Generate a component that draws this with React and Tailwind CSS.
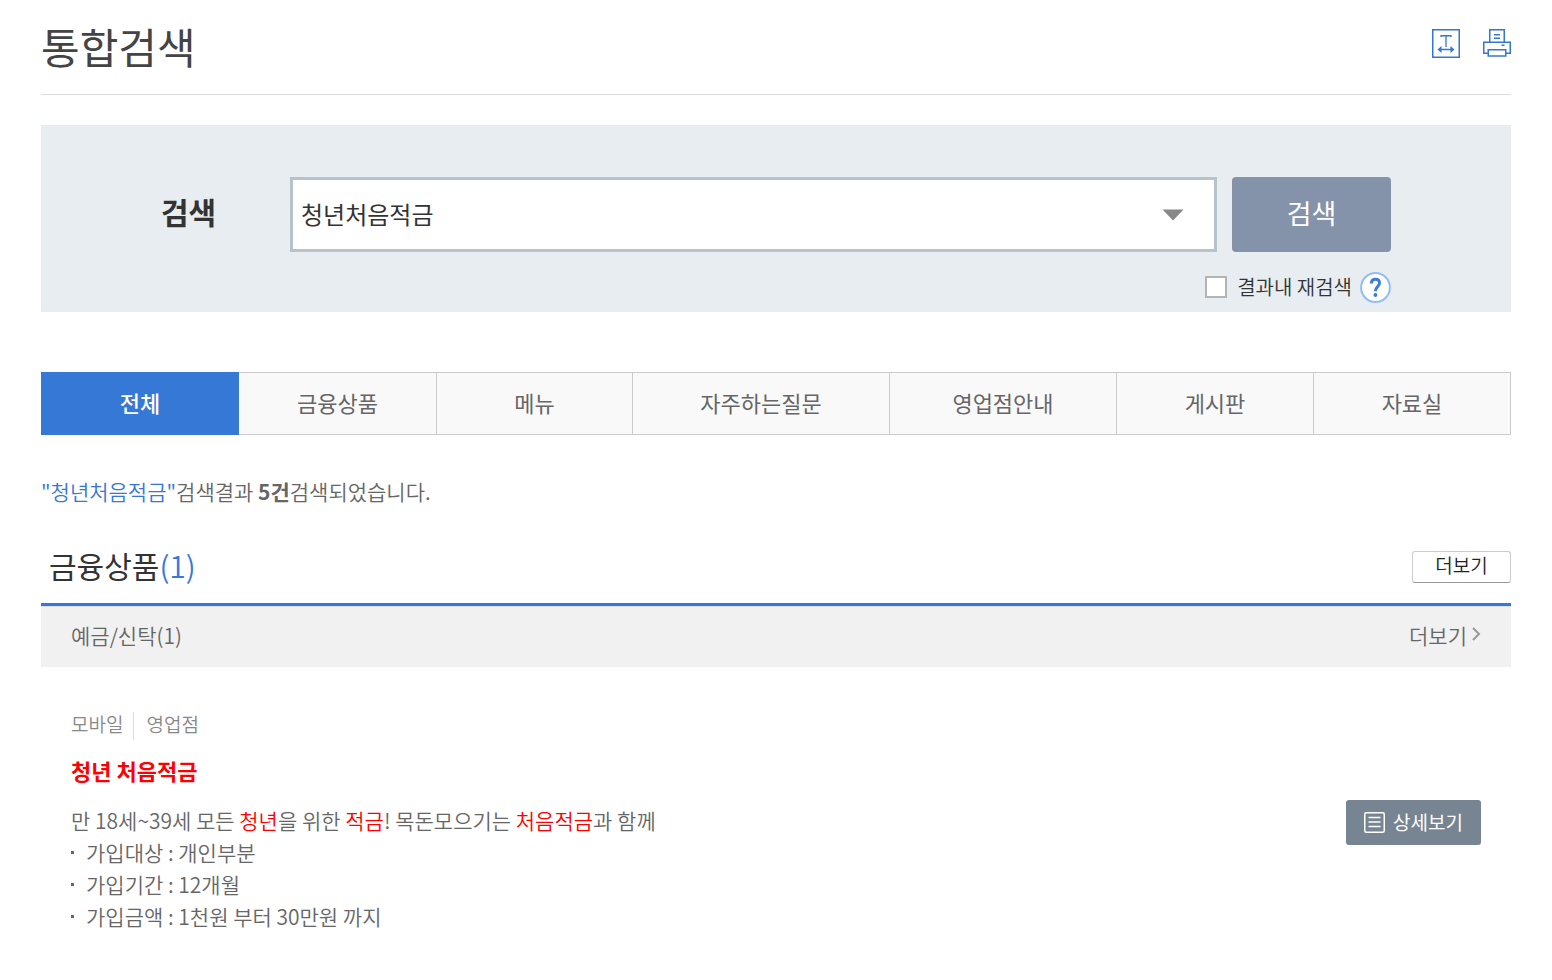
import { useState } from 'react';

const tabs = ['전체', '금융상품', '메뉴', '자주하는질문', '영업점안내', '게시판', '자료실'];

const details = [
  '가입대상 : 개인부분',
  '가입기간 : 12개월',
  '가입금액 : 1천원 부터 30만원 까지'
];

function TextSizeIcon() {
  return (
    <svg width="28" height="29" viewBox="0 0 28 29" fill="none" stroke="#3576d2" aria-hidden="true">
      <rect x="0.75" y="0.75" width="26.5" height="27.5" strokeWidth="1.5" />
      <path d="M9 8V6.75H19V8M14 7V18" strokeWidth="1.3" />
      <path d="M7 20.5H21" strokeWidth="1.5" />
      <path d="M9.5 17L5.5 20.5L9.5 24ZM18.5 17L22.5 20.5L18.5 24Z" fill="#3576d2" stroke="none" />
    </svg>
  );
}

function PrintIcon() {
  return (
    <svg width="28" height="28" viewBox="0 0 28 28" fill="none" stroke="#3576d2" strokeWidth="1.5" aria-hidden="true">
      <path d="M6.75 13V0.75H21.25V13" />
      <path d="M5 24.25H0.75V13.25H27.25V24.25H23" />
      <rect x="5.25" y="20.75" width="17.5" height="6.25" />
      <path d="M11 5.75H17M11 9.25H17M18.5 16.25H21.5" />
    </svg>
  );
}

function HelpIcon() {
  return (
    <svg width="31" height="31" viewBox="0 0 31 31" fill="none" aria-hidden="true">
      <circle cx="15.5" cy="15.5" r="14.4" fill="#fff" stroke="#8fbdf5" strokeWidth="2" />
      <path d="M11.4 11.5C11.4 8.6 13 7.3 15.4 7.3C17.8 7.3 19.5 8.8 19.5 11.1C19.5 14.6 15.4 14.8 15.4 19.2" stroke="#3f7bd9" strokeWidth="3" />
      <circle cx="15.4" cy="23" r="1.9" fill="#3f7bd9" />
    </svg>
  );
}

function ListIcon() {
  return (
    <svg width="21" height="21" viewBox="0 0 21 21" fill="none" stroke="#fff" aria-hidden="true">
      <rect x="0.75" y="0.75" width="19.5" height="19.5" rx="1.5" strokeWidth="1.5" />
      <path d="M4.5 5.5H16.5M4.5 10H16.5M4.5 14.5H16.5" strokeWidth="1.3" />
    </svg>
  );
}

export default function App() {
  const [keyword, setKeyword] = useState('청년처음적금');
  const [within, setWithin] = useState(false);
  const [activeTab, setActiveTab] = useState('전체');

  return (
    <main className="bg-white px-[41px] pb-12 font-['Noto_Sans_CJK_KR',sans-serif] text-[21px] font-[350] text-[#666]">
      <header className="flex h-[95px] items-center justify-between border-b border-[#ddd] pb-[2px]">
        <h1 className="text-[42px] leading-[60px] font-normal text-[#444]">통합검색</h1>
        <div className="flex items-center gap-[23px] pb-[6px]">
          <button type="button" aria-label="글자 크기"><TextSizeIcon /></button>
          <button type="button" aria-label="인쇄"><PrintIcon /></button>
        </div>
      </header>

      <form className="mt-[30px] bg-[#e8edf1] px-[120px] pt-[52px] pb-[9px]" onSubmit={(e) => e.preventDefault()}>
        <div className="flex h-[75px] items-center">
          <label htmlFor="keyword" className="w-[129px] pb-2 text-[30px] leading-10 font-bold text-[#333]">검색</label>
          <div className="flex h-full flex-1 items-center border-3 border-[#b8c2cb] bg-white pr-[30px]">
            <input
              id="keyword"
              type="text"
              value={keyword}
              onChange={(e) => setKeyword(e.target.value)}
              className="h-full min-w-0 flex-1 px-2 pb-[2px] text-[24px] font-normal text-[#333] outline-none"
            />
            <button type="button" aria-label="최근 검색어">
              <svg width="22" height="12" viewBox="0 0 22 12" aria-hidden="true">
                <path d="M0.5 0.5H21.5L11 11.5Z" fill="#888" />
              </svg>
            </button>
          </div>
          <button type="submit" className="ml-[15px] h-full w-[159px] rounded-[4px] bg-[#8593aa] pb-[2px] text-[27px] font-normal text-white">
            검색
          </button>
        </div>
        <div className="mt-[19px] flex items-center justify-end">
          <input
            id="within"
            type="checkbox"
            checked={within}
            onChange={(e) => setWithin(e.target.checked)}
            className="size-[22px] appearance-none border-2 border-[#b4b4b4] bg-white checked:bg-[#3576d2]"
          />
          <label htmlFor="within" className="mr-2 ml-[10px] text-[20px] leading-8 text-[#333]">결과내 재검색</label>
          <button type="button" aria-label="도움말"><HelpIcon /></button>
        </div>
      </form>

      <nav className="mt-[60px] grid h-[63px] grid-cols-[198fr_198fr_196fr_257fr_227fr_197fr_197fr]">
        {tabs.map((tab) => (
          <button
            key={tab}
            type="button"
            onClick={() => setActiveTab(tab)}
            className={
              tab === activeTab
                ? 'bg-[#3678d5] pb-[3px] text-[22px] font-medium text-white'
                : 'border-y border-r border-[#ccc] bg-[#f9f9f9] pb-[3px] text-[22px] font-normal text-[#666]'
            }
          >
            {tab}
          </button>
        ))}
      </nav>

      <p className="mt-10 leading-8">
        <span className="text-[#3678d5]">"청년처음적금"</span>검색결과 <strong className="font-bold">5건</strong>검색되었습니다.
      </p>

      <section className="mt-8">
        <div className="flex h-[67px] items-center justify-between border-b-3 border-[#3678d5] pb-3">
          <h2 className="pl-2 text-[30px] leading-10 font-normal text-[#333]">
            금융상품<span className="font-[350] text-[#3678d5]">(1)</span>
          </h2>
          <button type="button" className="mt-1 h-8 w-[99px] rounded-[3px] border border-[#ccc] border-b-[#999] pb-1 text-[19px] leading-6 text-[#222]">
            더보기
          </button>
        </div>
        <div className="flex h-[61px] items-center justify-between border-t border-[#ddd] bg-[#f1f1f1] px-[30px] pb-[2px]">
          <h3>예금/신탁(1)</h3>
          <a href="#deposit" className="flex items-center gap-[5px]">
            더보기
            <svg width="9" height="14" viewBox="0 0 9 14" fill="none" stroke="#999" strokeWidth="2" className="mb-1" aria-hidden="true">
              <path d="M1 1L7 7L1 13" />
            </svg>
          </a>
        </div>

        <article className="flex items-center justify-between px-[30px] pt-[45px]">
          <div>
            <div className="flex items-center text-[19px] text-[#888]">
              <span className="border-r border-[#ddd] pr-[10px] pb-1 leading-6">모바일</span>
              <span className="pb-1 pl-3 leading-6">영업점</span>
            </div>
            <h4 className="mt-[14px] text-[22px] leading-8 font-bold text-[#f00]">청년 처음적금</h4>
            <p className="mt-[18px] leading-8">
              만 18세~39세 모든 <span className="text-[#f00]">청년</span>을 위한 <span className="text-[#f00]">적금</span>! 목돈모으기는{' '}
              <span className="text-[#f00]">처음적금</span>과 함께
            </p>
            <ul>
              {details.map((item) => (
                <li key={item} className="flex items-center gap-3 leading-8">
                  <span className="size-[3px] bg-[#666]" />
                  {item}
                </li>
              ))}
            </ul>
          </div>
          <button type="button" className="flex h-[45px] w-[135px] items-center justify-center gap-2 rounded-[3px] bg-[#778492] text-[19px] font-normal text-white">
            <ListIcon />
            상세보기
          </button>
        </article>
      </section>
    </main>
  );
}
